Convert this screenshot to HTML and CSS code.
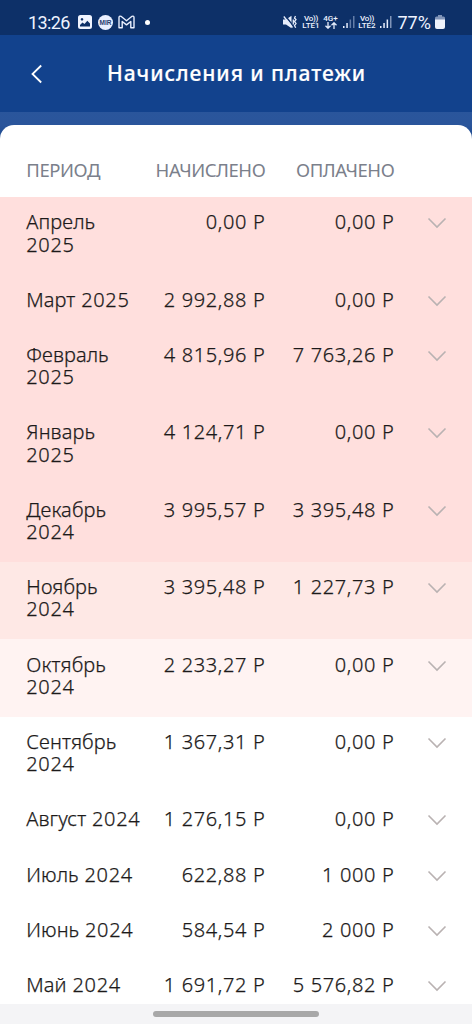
FILE: index.html
```
<!DOCTYPE html>
<html lang="ru">
<head>
<meta charset="utf-8">
<title>Начисления и платежи</title>
<link rel="stylesheet" href="styles.css">
</head>
<body>
<svg class="defs" width="0" height="0"><symbol id="down" viewBox="0 0 20 12"><path d="M1.500 1.500 10 10 18.500 1.500" fill="none" stroke="currentColor" stroke-width="1.600"/></symbol></svg>
<div class="screen">
  <div class="status">
    <span class="clock">13:26</span>
    <svg class="ic-photo" width="14" height="14" viewBox="0 0 14 14"><path fill="#f0f4ff" fill-rule="evenodd" d="M2.500 0h9A2.500 2.500 0 0 1 14 2.500v9a2.500 2.500 0 0 1-2.500 2.500h-9A2.500 2.500 0 0 1 0 11.500v-9A2.500 2.500 0 0 1 2.500 0zM2 11.500h10V8.500L9.300 5.800 6.500 9 4.500 7.500 2 10zM4 3a1.300 1.300 0 1 0 .01 0z"/></svg>
    <span class="mir">MIR</span>
    <svg class="ic-mail" width="17" height="14" viewBox="0 0 17 14"><path d="M1 12.800V2.500Q1 .6 3 1.300L8.500 5.700 14 1.300Q16 .6 16 2.500V12.800H12.800V6.500L8.500 9.900 4.200 6.500V12.800Z" fill="none" stroke="#eaf0ff" stroke-width="1.400" stroke-linejoin="round"/></svg>
    <span class="dot"></span>
    <svg class="ic-mute" width="14" height="14" viewBox="0 0 14 14"><path d="M0 4.500h3L8.500 .8v12.400L3 9.500H0z" fill="#e6edfc"/><path d="M2 .5 10 10.500" stroke="#0d2f68" stroke-width="1.400"/><path d="m.8 1.500 8.700 11" stroke="#e6edfc" stroke-width="1.300"/><path d="M10.300 4.500v5M12.500 1l-1 2 1.500 1.500-1.500 2L13 8.500l-1.500 2 1.200 2.300" fill="none" stroke="#e6edfc" stroke-width="1.300"/></svg>
    <span class="net vo1"><span class="vo">Vo))</span><span>LTE1</span></span>
    <span class="net data"><span>4G+</span><svg width="12" height="7" viewBox="0 0 12 7"><path d="M3 0v6M.5 3.700 3 6.200l2.500-2.500M9 7V1M6.500 3.300 9 .8l2.500 2.500" fill="none" stroke="#e6edfc" stroke-width="1.300"/></svg></span>
    <svg class="sig1" width="12" height="12" viewBox="0 0 12 12"><path d="M0 10h1.500v2H0zM3.300 7h1.500v5H3.300z" fill="#e6edfc"/><path d="M6.600 3.500h1.500V12H6.600zM10 0h1.500v12H10z" fill="#637da8"/></svg>
    <span class="net vo2"><span class="vo">Vo))</span><span>LTE2</span></span>
    <svg class="sig2" width="12" height="12" viewBox="0 0 12 12"><path d="M0 10h1.500v2H0zM3.300 7h1.500v5H3.300zM6.600 3.500h1.500V12H6.600z" fill="#e6edfc"/><path d="M10 0h1.500v12H10z" fill="#8094b8"/></svg>
    <span class="pct">77%</span>
    <svg class="batt" width="10" height="14" viewBox="0 0 10 14"><path d="M3 0h4v1.500h1.500Q10 1.500 10 3v2H0V3q0-1.500 1.500-1.500H3z" fill="#8094b8"/><path d="M0 4.500h10V12q0 2-2 2H2q-2 0-2-2z" fill="#eef2fc"/></svg>
  </div>
  <header class="bar">
    <svg class="back" width="12" height="20" viewBox="0 0 12 20"><path d="M10.200 1.500 1.500 10l8.700 8.500" fill="none" stroke="#fff" stroke-width="1.800"/></svg>
    <h1 class="title">Начисления и платежи</h1>
  </header>
  <main class="sheet">
    <div class="row head"><span>ПЕРИОД</span><span class="num">НАЧИСЛЕНО</span><span class="num">ОПЛАЧЕНО</span></div>
    <div class="row debt3"><span><span class="m">Апрель</span><br>2025</span><span class="num">0,00 Р</span><span class="num">0,00 Р</span><svg class="chev"><use href="#down"/></svg></div>
    <div class="row debt3"><span><span class="m">Март</span> 2025</span><span class="num">2 992,88 Р</span><span class="num">0,00 Р</span><svg class="chev"><use href="#down"/></svg></div>
    <div class="row debt3"><span><span class="m">Февраль</span><br>2025</span><span class="num">4 815,96 Р</span><span class="num">7 763,26 Р</span><svg class="chev"><use href="#down"/></svg></div>
    <div class="row debt3"><span><span class="m">Январь</span><br>2025</span><span class="num">4 124,71 Р</span><span class="num">0,00 Р</span><svg class="chev"><use href="#down"/></svg></div>
    <div class="row debt3"><span><span class="m">Декабрь</span><br>2024</span><span class="num">3 995,57 Р</span><span class="num">3 395,48 Р</span><svg class="chev"><use href="#down"/></svg></div>
    <div class="row debt2"><span><span class="m">Ноябрь</span><br>2024</span><span class="num">3 395,48 Р</span><span class="num">1 227,73 Р</span><svg class="chev"><use href="#down"/></svg></div>
    <div class="row debt1"><span><span class="m">Октябрь</span><br>2024</span><span class="num">2 233,27 Р</span><span class="num">0,00 Р</span><svg class="chev"><use href="#down"/></svg></div>
    <div class="row"><span><span class="m">Сентябрь</span><br>2024</span><span class="num">1 367,31 Р</span><span class="num">0,00 Р</span><svg class="chev"><use href="#down"/></svg></div>
    <div class="row"><span><span class="m">Август</span> 2024</span><span class="num">1 276,15 Р</span><span class="num">0,00 Р</span><svg class="chev"><use href="#down"/></svg></div>
    <div class="row"><span><span class="m">Июль</span> 2024</span><span class="num">622,88 Р</span><span class="num">1 000 Р</span><svg class="chev"><use href="#down"/></svg></div>
    <div class="row"><span><span class="m">Июнь</span> 2024</span><span class="num">584,54 Р</span><span class="num">2 000 Р</span><svg class="chev"><use href="#down"/></svg></div>
    <div class="row"><span><span class="m">Май</span> 2024</span><span class="num">1 691,72 Р</span><span class="num">5 576,82 Р</span><svg class="chev"><use href="#down"/></svg></div>
  </main>
  <div class="nav"><span class="handle"></span></div>
</div>
</body>
</html>
```
FILE: styles.css
```
* { box-sizing: border-box; }
body { margin: 0; font-family: "Noto Sans", sans-serif; color: #1c1a1a; }
.defs { display: block; }
.screen { width: 472px; height: 1024px; overflow: hidden; display: flex; flex-direction: column; background: linear-gradient(#2a5aa0, #2a559b 125px, #174489 145px); }
.status { flex: none; height: 35px; padding: 9px 0 0 28px; background: #0d3068; color: #eef3ff; display: flex; align-items: center; font-family: Roboto, sans-serif; }
.clock { width: 50px; font-size: 18px; letter-spacing: -.6px; white-space: nowrap; }
.mir { width: 15px; height: 15px; border-radius: 50%; margin-left: 6px; background: #eaf0ff; color: #28406f; font: bold 6.500px/15px "Liberation Sans", sans-serif; text-align: center; }
.ic-mail { margin-left: 5px; }
.dot { width: 5px; height: 5px; border-radius: 50%; background: #fff; margin-left: 10px; }
.ic-mute { margin-left: 133px; }
.net { display: flex; flex-direction: column; align-items: center; font-size: 8px; line-height: 7.500px; font-weight: 500; height: 15px; white-space: nowrap; }
.vo { letter-spacing: -.3px; }
.vo1 { width: 18px; margin-left: 5px; }
.data { width: 15px; margin-left: 3px; }
.sig1 { margin-left: 5px; }
.vo2 { width: 18px; margin-left: 3px; }
.sig2 { margin-left: 4px; }
.pct { font-size: 18px; width: 36px; margin-left: 5.500px; white-space: nowrap; }
.batt { margin-left: 1.500px; }
.status svg { flex: none; }
.bar { flex: none; height: 77px; margin-bottom: 12.500px; padding: 0 107px 0 31px; display: flex; align-items: center; background: #12428d; color: #fff; }
.back { flex: none; }
.title { margin: -2px 0 0 64px; font-size: 21px; font-weight: 500; line-height: 28px; white-space: nowrap; letter-spacing: .95px; -webkit-text-stroke: .2px #fff; }
.sheet { flex: 1; min-height: 0; overflow: hidden; background: #fff; border-radius: 14px 14px 0 0; }
.row { display: grid; grid-template-columns: 120.500px 118.500px 129px 44px; padding: 14.400px 0 18.700px 26.300px; font-size: 20px; font-weight: 300; line-height: 22.150px; letter-spacing: .63px; white-space: nowrap; -webkit-text-stroke: .25px #1c1a1a; }
.m { letter-spacing: .1px; }
.num { text-align: right; }
.chev { width: 20px; height: 12px; margin: 6px 0 0 33px; color: #b9b2b2; }
.debt3 { background: #ffdfdd; }
.debt2 { background: #fee8e5; }
.debt1 { background: #fff3f2; }
.head { height: 72.500px; padding-top: 34px; padding-bottom: 0; font-size: 18.500px; font-weight: 400; color: #7b808b; letter-spacing: -.45px; -webkit-text-stroke: 0; }
.nav { flex: none; height: 20px; background: #f4f4f6; display: flex; justify-content: center; padding-top: 7px; }
.handle { width: 166px; height: 6px; border-radius: 3px; background: #a8a8a8; }
```
